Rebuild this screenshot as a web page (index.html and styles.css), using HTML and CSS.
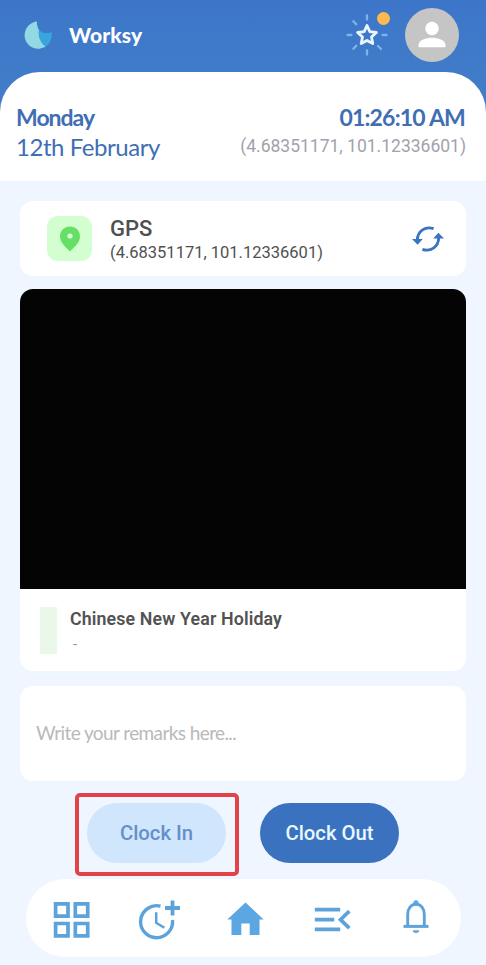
FILE: index.html
```html
<!DOCTYPE html>
<html lang="en">
<head>
<meta charset="utf-8">
<meta name="viewport" content="width=device-width, initial-scale=1">
<title>Worksy</title>
<link rel="stylesheet" href="styles.css">
</head>
<body>
<div class="app">
  <header class="top">
    <div class="bar">
      <svg class="logo" viewBox="0 0 28 28" aria-hidden="true">
        <path fill="#38a5dc" d="M13 .6C12.800 5 14.500 9 18 11.200C21 12.600 25 12.200 27.800 11.200C28.300 19 24.500 24.500 19.500 27L13 15Z"/>
        <path fill="#94d8e4" d="M13 .6C12.600 3.500 13.200 6.500 14.800 8.800C14 16 16 21.500 21.500 25.600A13.600 13.600 0 1 1 13 .6Z"/>
      </svg>
      <span class="brand">Worksy</span>
      <div class="spark">
        <svg width="48" height="48" viewBox="0 0 48 48" fill="none" aria-hidden="true">
          <path stroke="#7cb5ee" stroke-width="2.300" stroke-linecap="round" d="M24 4.500v4M24 39.500v4M4.500 24h4M39.500 24h4M10.300 10.300l3 3M35 35l3 3M10.300 37.700l3-3"/>
          <path stroke="#eaf6ff" stroke-width="2.800" stroke-linejoin="round" d="M24 14.500l2.800 6.200 6.600.8-4.900 4.500 1.300 6.600L24 29.400l-5.800 3.200 1.300-6.600-4.900-4.500 6.600-.8z"/>
        </svg>
        <i class="dot"></i>
      </div>
      <svg class="avatar" viewBox="0 0 54 54" aria-hidden="true">
        <circle cx="27" cy="27" r="27" fill="#c5c5c5"/>
        <circle cx="27" cy="20.500" r="6.700" fill="#fff"/>
        <path fill="#fff" d="M13.500 39.300v-2.500c0-4.500 8-7 13.500-7s13.500 2.500 13.500 7v2.500z"/>
      </svg>
    </div>
    <div class="datetime">
      <div>
        <div class="day">Monday</div>
        <div class="date">12th February</div>
      </div>
      <div class="right">
        <div class="time">01:26:10 AM</div>
        <div class="coords">(4.68351171, 101.12336601)</div>
      </div>
    </div>
  </header>

  <main class="content">
    <section class="card gps">
      <div class="pin">
        <svg width="20" height="26" viewBox="0 0 20 26" aria-hidden="true"><path fill="#66df66" fill-rule="evenodd" d="M10 .5C4.400 .5 0 4.800 0 10.300 0 17 6.500 22 10 25.500 13.500 22 20 17 20 10.300 20 4.800 15.600 .5 10 .5z"/><circle cx="10" cy="10" r="2.600" fill="#d4ffd0"/></svg>
      </div>
      <div class="gps-text">
        <div class="gps-title">GPS</div>
        <div class="gps-coords">(4.68351171, 101.12336601)</div>
      </div>
      <svg class="refresh" viewBox="0 0 32 26" fill="none" aria-hidden="true">
        <path stroke="#3b74bf" stroke-width="2.900" d="M21.600 2.700C13.500 -.2 5.600 5 5.300 14M10.400 23.300C18.500 26.200 26.400 21 26.700 12"/>
        <path fill="#3b74bf" d="M0 13h10.800L5.600 18.800zM21.200 12.500H32L26.400 6.700z"/>
      </svg>
    </section>

    <section class="card event">
      <div class="camera"></div>
      <div class="event-row">
        <i class="tag"></i>
        <div>
          <div class="event-title">Chinese New Year Holiday</div>
          <div class="event-note">-</div>
        </div>
      </div>
    </section>

    <section class="card remarks">Write your remarks here...</section>

    <div class="actions">
      <div class="highlight"><button class="btn in">Clock In</button></div>
      <button class="btn out">Clock Out</button>
    </div>
  </main>

  <nav class="nav">
    <svg viewBox="0 0 48 48"><path d="M9.600 9.800h12.400v12.400H9.600zM29.300 9.800h12.400v12.400H29.300zM9.600 29.500h12.400v12.400H9.600zM29.300 29.500h12.400v12.400H29.300z" stroke-width="3.700"/></svg>
    <svg viewBox="0 0 48 48"><path d="M27.500 12.200A16 16 0 1 0 39.500 26" stroke-width="3.400"/><path d="M39.500 6.400v15M32 14h15" stroke-width="3.800"/><path d="M23.200 18.300v10.400l8.200 5" stroke-width="2.500"/></svg>
    <svg viewBox="0 0 48 48"><path class="solid" d="M25.500 8.500L43.700 25.500H39.500V41H29.700V29.500H21.300V41H11.500V25.500H7.300z"/></svg>
    <svg viewBox="0 0 48 48"><path d="M7.800 15.700h25.400M7.800 25.700h19.400M7.800 35.300h25.400M42.300 17.200l-8.800 8.500 8.800 8.500" stroke-width="3.700"/></svg>
    <svg viewBox="0 0 48 48"><path d="M13.700 31.500V20.500C13.700 14.500 17 10.300 22 10.300s8.300 4.200 8.300 10.200v11" stroke-width="2.900"/><path d="M9.500 32.400h25" stroke-width="3"/><circle class="solid" cx="22" cy="8.800" r="2.600"/><path class="solid" d="M18.800 36.300h6.400a3.200 2.600 0 0 1-6.400 0z"/></svg>
  </nav>
</div>
</body>
</html>
```
FILE: styles.css
```css
* { box-sizing: border-box; }
body { margin: 0; background: #eff6ff; font-family: Roboto, "Liberation Sans", sans-serif; }
.app { width: 486px; height: 965px; overflow: hidden; display: flex; flex-direction: column; }

.top { height: 181px; background: linear-gradient(#3d76c9, #427ec9 110px); }
.bar { height: 72px; padding: 0 27px 3px 24px; display: flex; align-items: center; }
.logo { width: 28px; height: 28px; overflow: visible; }
.brand { margin-left: 17px; color: #fff; font: 900 21px/28px Lato, sans-serif; letter-spacing: .1px; }
.spark { position: relative; width: 48px; height: 48px; margin-left: auto; margin-right: 14px; }
.dot { position: absolute; left: 34px; top: 1px; width: 13px; height: 13px; border-radius: 50%; background: #ffb84e; }
.avatar { width: 54px; height: 54px; }

.datetime { height: 109px; padding: 31px 20px 0 16px; display: flex; justify-content: space-between; background: #fff; border-radius: 40px 40px 0 0; color: #3f6eb4; font-family: Lato, sans-serif; white-space: nowrap; }
.day { font-size: 23px; line-height: 29px; font-weight: 700; letter-spacing: -1px; }
.date { font-size: 24px; line-height: 30px; letter-spacing: -.45px; }
.right { text-align: right; }
.time { font-size: 23px; line-height: 29px; font-weight: 700; letter-spacing: -.8px; padding-right: 1px; }
.coords { font: 400 17.500px/28px Roboto, sans-serif; color: #a2a2ac; }

.content { padding: 20px 20px 0; display: flex; flex-direction: column; height: 698px; }
.card { background: #fff; border-radius: 13px; }
.gps { height: 75px; padding: 0 22px 0 27px; display: flex; align-items: center; }
.pin { width: 45px; height: 45px; border-radius: 11px; background: #d3ffd0; display: flex; align-items: center; justify-content: center; }
.gps-text { margin-left: 18px; padding-top: 2px; color: #505050; white-space: nowrap; }
.gps-title { font-size: 22px; line-height: 25px; font-weight: 500; }
.gps-coords { font-size: 16.500px; line-height: 23px; }
.refresh { width: 32px; height: 26px; margin-left: auto; }

.event { margin-top: 13px; height: 382px; overflow: hidden; }
.camera { height: 300px; background: #050404; }
.event-row { display: flex; padding: 18px 20px 0; }
.tag { width: 17px; height: 47px; margin-right: 13px; background: #eaf8e9; }
.event-title { font-size: 17.800px; line-height: 24px; font-weight: 600; letter-spacing: .13px; color: #525252; white-space: nowrap; }
.event-note { padding-left: 3px; font-size: 15px; line-height: 26px; color: #999; }

.remarks { margin-top: 15px; height: 95px; padding: 0 0 2px 16px; display: flex; align-items: center; color: #b9b9b9; font: 400 19px Lato, sans-serif; letter-spacing: -.6px; }

.actions { margin: 12px 0 0 55px; display: flex; align-items: flex-start; gap: 21px; }
.highlight { width: 164px; height: 83px; padding: 6px 0 0 8px; border: 4px solid #e14349; border-radius: 5px; }
.btn { display: block; width: 139px; height: 60px; padding: 0; border: 0; border-radius: 30px; font: 500 20.300px Roboto, sans-serif; }
.in { background: #cfe6fd; color: #658fca; }
.out { margin-top: 10px; background: #3a72c0; color: #e8f8ff; }

.nav { width: 435px; height: 78px; margin-left: 26px; padding: 0; border-radius: 39px; background: #fff; display: grid; grid-template-columns: repeat(5, 87px); place-items: center; }
.nav svg { width: 48px; height: 48px; margin: 0 0 1px 0; fill: none; stroke: #5ca3db; }
.nav .solid { fill: #5ca6e2; stroke: none; }
```
